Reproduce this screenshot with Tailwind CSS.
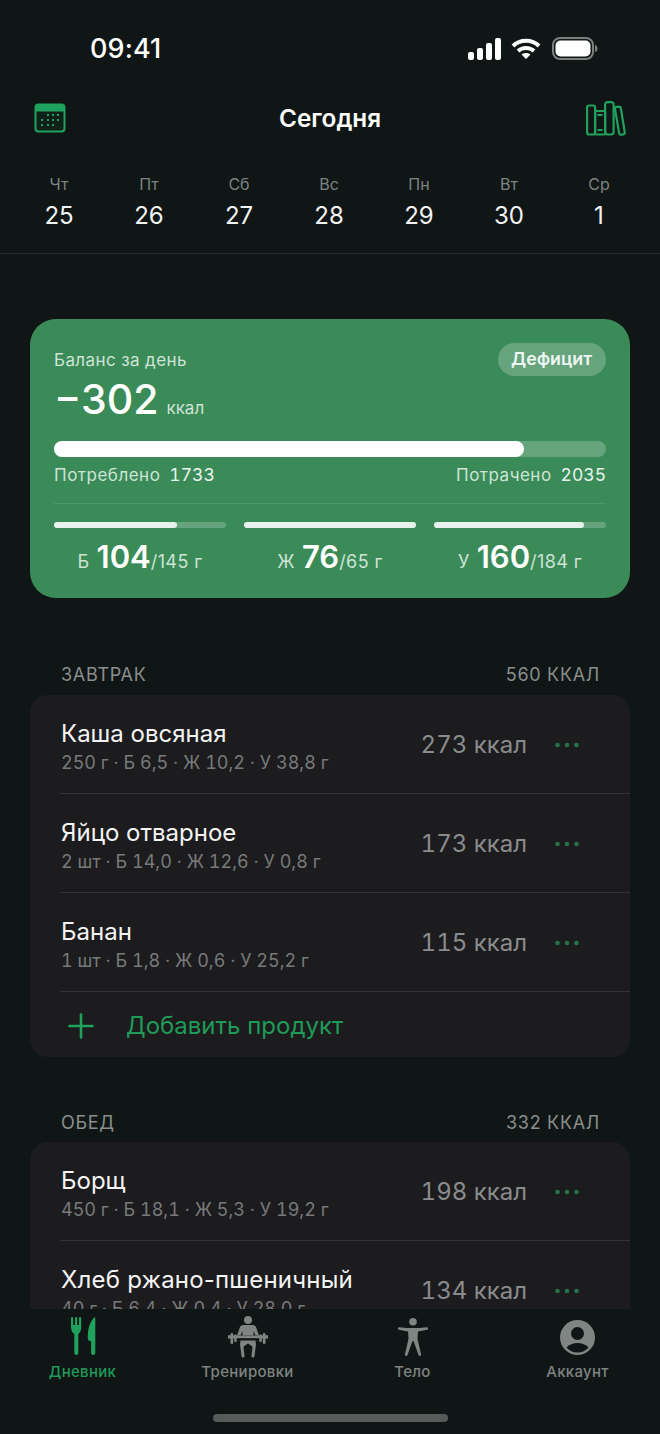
<!DOCTYPE html>
<html lang="ru">
<head>
<meta charset="utf-8">
<script src="https://cdn.jsdelivr.net/npm/@tailwindcss/browser@4"></script>
</head>
<body class="m-0 bg-[#0f1615]">
<div class="w-[660px] h-[1434px] flex flex-col overflow-hidden bg-[#0f1615] text-white font-['Inter',sans-serif]">
  <!-- scrolling region -->
  <div class="h-[1309px] shrink-0 overflow-hidden">
    <!-- status bar -->
    <div class="h-[96px] flex items-start justify-between pl-[90px] pr-[62px] pt-[33px]">
      <span class="text-[27px] leading-[32px] font-medium tracking-[0.1px]">09:41</span>
      <div class="flex items-center pt-[4px]">
        <svg class="mr-[9px]" width="34" height="22" viewBox="0 0 34 22" fill="#fff"><rect x="0" y="14" width="6" height="8" rx="2"/><rect x="9" y="10" width="6" height="12" rx="2"/><rect x="18" y="5" width="6" height="17" rx="2"/><rect x="27" y="0" width="6" height="22" rx="2"/></svg>
        <svg class="mr-[11px]" width="30" height="22" viewBox="0 0 30 22" fill="none" stroke="#fff" stroke-width="4"><path d="M2 8 C9 1 21 1 28 8"/><path d="M7 13 C11.500 9 18.500 9 23 13"/><path d="M15 21 L10.500 16.500 C13 14.500 17 14.500 19.500 16.500 Z" fill="#fff" stroke="none"/></svg>
        <svg width="46" height="24" viewBox="0 0 46 24" fill="none"><rect x="1" y="1" width="40" height="21" rx="7" stroke="#7d7f7f" stroke-width="2"/><rect x="3.500" y="3.500" width="35" height="16" rx="5" fill="#fff"/><path d="M43 8 C45 8.500 45.500 10 45.500 11.500 C45.500 13 45 14.500 43 15 Z" fill="#7d7f7f"/></svg>
      </div>
    </div>
    <!-- nav -->
    <div class="h-[44px] grid grid-cols-[1fr_auto_1fr] items-center px-[34px]">
      <svg width="32" height="30" viewBox="0 0 32 30"><rect x="0.500" y="0.500" width="31" height="29" rx="4" fill="#1fa25d"/><path d="M2.500 8.500 H29.500 V25 A2.500 2.500 0 0 1 27 27.500 H5 A2.500 2.500 0 0 1 2.500 25 Z" fill="#0f1f1a"/><g fill="#1fa25d"><rect x="13" y="11" width="2" height="2"/><rect x="18" y="11" width="2" height="2"/><rect x="23" y="11" width="2" height="2"/><rect x="7" y="16" width="2" height="2"/><rect x="13" y="16" width="2" height="2"/><rect x="18" y="16" width="2" height="2"/><rect x="23" y="16" width="2" height="2"/><rect x="7" y="21" width="2" height="2"/><rect x="13" y="21" width="2" height="2"/><rect x="18" y="21" width="2" height="2"/></g></svg>
      <span class="text-[24.300px] leading-[32px] font-semibold">Сегодня</span>
      <svg class="justify-self-end" width="40" height="35" viewBox="0 0 40 35" fill="none" stroke="#1fa25d" stroke-width="2.200"><rect x="1.100" y="4.500" width="8" height="29" rx="2"/><rect x="9.100" y="10" width="10" height="23.500" rx="1"/><rect x="19.100" y="1.100" width="8.500" height="32.400" rx="2.500"/><path d="M30 6 L33 5.600 Q34.500 5.500 34.800 7 L38.700 31 Q39 33 37.500 33.300 L35 33.700 Q33.500 33.900 33.200 32.500 L29 8 Q28.800 6.200 30 6 Z"/><path d="M11.500 14 H16.500 M11.500 29 H16.500" stroke-width="1.800"/></svg>
    </div>
    <!-- week -->
    <div class="h-[114px] px-[14px] pt-[34px] border-b border-[#262b2b] flex">
      <div class="w-[90px] flex flex-col items-center"><span class="text-[16px] leading-[20px] text-[#7e8382]">Чт</span><span class="mt-[7px] text-[24px] leading-[30px] text-[#f2f3f3]">25</span></div>
      <div class="w-[90px] flex flex-col items-center"><span class="text-[16px] leading-[20px] text-[#7e8382]">Пт</span><span class="mt-[7px] text-[24px] leading-[30px] text-[#f2f3f3]">26</span></div>
      <div class="w-[90px] flex flex-col items-center"><span class="text-[16px] leading-[20px] text-[#7e8382]">Сб</span><span class="mt-[7px] text-[24px] leading-[30px] text-[#f2f3f3]">27</span></div>
      <div class="w-[90px] flex flex-col items-center"><span class="text-[16px] leading-[20px] text-[#7e8382]">Вс</span><span class="mt-[7px] text-[24px] leading-[30px] text-[#f2f3f3]">28</span></div>
      <div class="w-[90px] flex flex-col items-center"><span class="text-[16px] leading-[20px] text-[#7e8382]">Пн</span><span class="mt-[7px] text-[24px] leading-[30px] text-[#f2f3f3]">29</span></div>
      <div class="w-[90px] flex flex-col items-center"><span class="text-[16px] leading-[20px] text-[#7e8382]">Вт</span><span class="mt-[7px] text-[24px] leading-[30px] text-[#f2f3f3]">30</span></div>
      <div class="w-[90px] flex flex-col items-center"><span class="text-[16px] leading-[20px] text-[#7e8382]">Ср</span><span class="mt-[7px] text-[24px] leading-[30px] text-[#f2f3f3]">1</span></div>
    </div>
    <!-- balance card -->
    <div class="mx-[30px] mt-[65px] h-[279px] rounded-[26px] bg-[#3a8b58] px-[24px] pt-[24px]">
      <div class="flex justify-between items-start h-[33px]">
        <span class="text-[17px] leading-[35px] text-[#cfe3d6] tracking-[0.4px]">Баланс за день</span>
        <span class="h-[33px] w-[108px] rounded-full bg-[#65a47d] flex items-center justify-center pr-[1px] text-[17.800px] font-semibold text-[#eef6f1]">Дефицит</span>
      </div>
      <div class="flex items-baseline h-[46px]">
        <span class="text-[41px] leading-[46px] font-medium">−302</span>
        <span class="ml-[8px] text-[17px] text-[#cfe3d6]">ккал</span>
      </div>
      <div class="mt-[19px] h-[16px] rounded-full bg-[#65a47d]"><div class="h-full w-[85.100%] rounded-full bg-white"></div></div>
      <div class="mt-[7px] flex justify-between text-[17px] leading-[22px] text-[#cfe3d6] tracking-[0.5px]">
        <span>Потреблено<span class="ml-[9px] text-[17.500px] tabular-nums tracking-normal text-[#e9f3ed]">1733</span></span>
        <span>Потрачено<span class="ml-[9px] text-[17.500px] tabular-nums tracking-normal text-[#e9f3ed]">2035</span></span>
      </div>
      <div class="mt-[17px] h-px bg-[#4d9769]"></div>
      <div class="mt-[18px] grid grid-cols-3 gap-[18px]">
        <div>
          <div class="h-[6px] rounded-full bg-[#65a47d]"><div class="h-full w-[71.500%] rounded-full bg-[#e8f2ec]"></div></div>
          <div class="mt-[11px] flex items-baseline justify-center text-[18px] text-[#cfe3d6] leading-[36px] tracking-[0.4px]">Б<span class="ml-[7px] text-[31px] font-semibold text-white tracking-normal">104</span><span>/145 г</span></div>
        </div>
        <div>
          <div class="h-[6px] rounded-full bg-[#65a47d]"><div class="h-full w-full rounded-full bg-[#e8f2ec]"></div></div>
          <div class="mt-[11px] flex items-baseline justify-center text-[18px] text-[#cfe3d6] leading-[36px] tracking-[0.4px]">Ж<span class="ml-[7px] text-[31px] font-semibold text-white tracking-normal">76</span><span>/65 г</span></div>
        </div>
        <div>
          <div class="h-[6px] rounded-full bg-[#65a47d]"><div class="h-full w-[87%] rounded-full bg-[#e8f2ec]"></div></div>
          <div class="mt-[11px] flex items-baseline justify-center text-[18px] text-[#cfe3d6] leading-[36px] tracking-[0.4px]">У<span class="ml-[7px] text-[31px] font-semibold text-white tracking-normal">160</span><span>/184 г</span></div>
        </div>
      </div>
    </div>
    <!-- breakfast -->
    <div class="mt-[64px] mx-[60px] h-[33px] flex justify-between text-[18px] leading-[26px] tracking-[0.7px] text-[#8a8e8d]"><span class="pl-[1px]">ЗАВТРАК</span><span>560 ККАЛ</span></div>
    <div class="mx-[30px] rounded-[18px] bg-[#1c1c1e] overflow-hidden">
      <div class="h-[98px] pl-[31px] pr-[51px] pt-[2px] flex items-center justify-between">
        <div class="mt-[4px] flex flex-col"><span class="text-[24px] leading-[28px] text-[#f4f4f4]">Каша овсяная</span><span class="mt-[4px] text-[18px] leading-[22px] tabular-nums text-[#77797a]">250 г · Б 6,5 · Ж 10,2 · У 38,8 г</span></div>
        <div class="flex items-center gap-[28px]"><span class="text-[24px] tabular-nums text-[#8a8b8c]">273 ккал</span><svg width="24" height="6" viewBox="0 0 24 6" fill="#27734a"><circle cx="2.500" cy="3" r="2.300"/><circle cx="12" cy="3" r="2.300"/><circle cx="21.500" cy="3" r="2.300"/></svg></div>
      </div>
      <div class="ml-[30px] h-px bg-[#333335]"></div>
      <div class="h-[98px] pl-[31px] pr-[51px] pt-[2px] flex items-center justify-between">
        <div class="mt-[4px] flex flex-col"><span class="text-[24px] leading-[28px] text-[#f4f4f4]">Яйцо отварное</span><span class="mt-[4px] text-[18px] leading-[22px] tabular-nums text-[#77797a]">2 шт · Б 14,0 · Ж 12,6 · У 0,8 г</span></div>
        <div class="flex items-center gap-[28px]"><span class="text-[24px] tabular-nums text-[#8a8b8c]">173 ккал</span><svg width="24" height="6" viewBox="0 0 24 6" fill="#27734a"><circle cx="2.500" cy="3" r="2.300"/><circle cx="12" cy="3" r="2.300"/><circle cx="21.500" cy="3" r="2.300"/></svg></div>
      </div>
      <div class="ml-[30px] h-px bg-[#333335]"></div>
      <div class="h-[98px] pl-[31px] pr-[51px] pt-[2px] flex items-center justify-between">
        <div class="mt-[4px] flex flex-col"><span class="text-[24px] leading-[28px] text-[#f4f4f4]">Банан</span><span class="mt-[4px] text-[18px] leading-[22px] tabular-nums text-[#77797a]">1 шт · Б 1,8 · Ж 0,6 · У 25,2 г</span></div>
        <div class="flex items-center gap-[28px]"><span class="text-[24px] tabular-nums text-[#8a8b8c]">115 ккал</span><svg width="24" height="6" viewBox="0 0 24 6" fill="#27734a"><circle cx="2.500" cy="3" r="2.300"/><circle cx="12" cy="3" r="2.300"/><circle cx="21.500" cy="3" r="2.300"/></svg></div>
      </div>
      <div class="ml-[30px] h-px bg-[#333335]"></div>
      <div class="h-[65px] pl-[38px] flex items-center gap-[32px] pt-[2px]">
        <svg width="26" height="26" viewBox="0 0 26 26" stroke="#1fa25d" stroke-width="2.600" stroke-linecap="round"><path d="M13 1.500 V24.500 M1.500 13 H24.500"/></svg>
        <span class="text-[24px] text-[#1f9a59]">Добавить продукт</span>
      </div>
    </div>
    <!-- lunch -->
    <div class="mt-[53px] mx-[60px] h-[32px] flex justify-between text-[18px] leading-[26px] tracking-[0.7px] text-[#8a8e8d]"><span class="pl-[1px]">ОБЕД</span><span>332 ККАЛ</span></div>
    <div class="mx-[30px] rounded-[18px] bg-[#1c1c1e] overflow-hidden">
      <div class="h-[98px] pl-[31px] pr-[51px] pt-[2px] flex items-center justify-between">
        <div class="mt-[4px] flex flex-col"><span class="text-[24px] leading-[28px] text-[#f4f4f4]">Борщ</span><span class="mt-[4px] text-[18px] leading-[22px] tabular-nums text-[#77797a]">450 г · Б 18,1 · Ж 5,3 · У 19,2 г</span></div>
        <div class="flex items-center gap-[28px]"><span class="text-[24px] tabular-nums text-[#8a8b8c]">198 ккал</span><svg width="24" height="6" viewBox="0 0 24 6" fill="#27734a"><circle cx="2.500" cy="3" r="2.300"/><circle cx="12" cy="3" r="2.300"/><circle cx="21.500" cy="3" r="2.300"/></svg></div>
      </div>
      <div class="ml-[30px] h-px bg-[#333335]"></div>
      <div class="h-[98px] pl-[31px] pr-[51px] pt-[2px] flex items-center justify-between">
        <div class="mt-[4px] flex flex-col"><span class="text-[24px] leading-[28px] tracking-[0.2px] text-[#f4f4f4]">Хлеб ржано-пшеничный</span><span class="mt-[4px] text-[18px] leading-[22px] tabular-nums text-[#77797a]">40 г · Б 6,4 · Ж 0,4 · У 28,0 г</span></div>
        <div class="flex items-center gap-[28px]"><span class="text-[24px] tabular-nums text-[#8a8b8c]">134 ккал</span><svg width="24" height="6" viewBox="0 0 24 6" fill="#27734a"><circle cx="2.500" cy="3" r="2.300"/><circle cx="12" cy="3" r="2.300"/><circle cx="21.500" cy="3" r="2.300"/></svg></div>
      </div>
    </div>
  </div>
  <!-- tab bar -->
  <div class="h-[125px] shrink-0 flex flex-col items-center">
    <div class="w-full grid grid-cols-4 h-[105px]">
      <div class="flex flex-col items-center">
        <div class="h-[53px] pt-[7px] flex"><svg width="26" height="40" viewBox="0 0 26 40" fill="#1fa25d"><path d="M1 2 a1.100 1.100 0 0 1 2.200 0 V9 H5 V2 a1.100 1.100 0 0 1 2.200 0 V9 H9 V2 a1.100 1.100 0 0 1 2.200 0 V11 Q11.200 16 8.300 18 V37 a2 2 0 0 1 -4 0 V18 Q1 16 1 11 Z"/><path d="M24.500 1 Q25.300 1 25.300 2.500 V37 a2.100 2.100 0 0 1 -4.200 0 V25 H20 Q17.700 25 17.700 21 Q17.700 8 24.500 1 Z"/></svg></div>
        <span class="text-[15px] leading-[20px] tracking-[0.3px] font-medium text-[#1f9a59]">Дневник</span>
      </div>
      <div class="flex flex-col items-center">
        <div class="h-[53px] pt-[7px] flex"><svg width="40" height="42" viewBox="0 0 40 42" fill="#808483"><circle cx="20" cy="4" r="4"/><path d="M15 9 H25 Q27 9 28 11 L31 19.500 H27.500 L25.500 15 V19.500 H14.500 V15 L12.500 19.500 H9 L12 11 Q13 9 15 9 Z"/><rect x="1" y="19.500" width="38" height="2.700"/><rect x="0" y="19" width="2" height="3.700" rx="1"/><rect x="2.500" y="17" width="2.700" height="11" rx="1.200"/><rect x="6.200" y="18.500" width="2.500" height="7.500" rx="1"/><rect x="31.300" y="18.500" width="2.500" height="7.500" rx="1"/><rect x="34.800" y="17" width="2.700" height="11" rx="1.200"/><rect x="38" y="19" width="2" height="3.700" rx="1"/><path d="M12.500 24.500 H27.500 L28 28 L26.500 40 A1.500 1.500 0 0 1 23.500 40 L24.500 30.500 L20 27.500 L15.500 30.500 L16.500 40 A1.500 1.500 0 0 1 13.500 40 L12 28 Z"/></svg></div>
        <span class="text-[15px] leading-[20px] tracking-[0.3px] font-medium text-[#7f8382]">Тренировки</span>
      </div>
      <div class="flex flex-col items-center">
        <div class="h-[53px] pt-[9px] flex"><svg width="30" height="38" viewBox="0 0 30 38" fill="#808483"><circle cx="15" cy="3.800" r="3.800"/><path d="M1.500 9.200 Q15 11 28.500 9.200 A1.300 1.300 0 0 1 29 11.800 Q24 13 20 13.500 L19.500 21 L23 36 A1.300 1.300 0 0 1 20.500 37 L15.500 23 H14.500 L9.500 37 A1.300 1.300 0 0 1 7 36 L10.500 21 L10 13.500 Q6 13 1 11.800 A1.300 1.300 0 0 1 1.500 9.200 Z"/></svg></div>
        <span class="text-[15px] leading-[20px] tracking-[0.3px] font-medium text-[#7f8382]">Тело</span>
      </div>
      <div class="flex flex-col items-center">
        <div class="h-[53px] pt-[11px] flex"><svg width="35" height="35" viewBox="0 0 35 35"><circle cx="17.500" cy="17.500" r="17.500" fill="#808483"/><circle cx="17.500" cy="13.500" r="6.500" fill="#0f1615"/><path d="M6.500 27.500 C9 24.500 13 23 17.500 23 C22 23 26 24.500 28.500 27.500 C26 30.500 22 32.500 17.500 32.500 C13 32.500 9 30.500 6.500 27.500 Z" fill="#0f1615"/></svg></div>
        <span class="text-[15px] leading-[20px] tracking-[0.3px] font-medium text-[#7f8382]">Аккаунт</span>
      </div>
    </div>
    <div class="w-[235px] h-[8px] rounded-full bg-[#585a5a]"></div>
  </div>
</div>
</body>
</html>
